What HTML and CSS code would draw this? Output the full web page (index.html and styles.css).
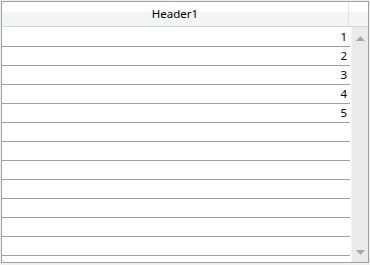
FILE: index.html
```html
<!DOCTYPE html>
<html lang="en">
<head>
    <meta charset="UTF-8">
    <title>Grid</title>
    <link rel="stylesheet" href="styles.css">
</head>
<body>
    <div class="grid">
        <div class="grid-header">
            <div class="col-header">Header1</div>
            <div class="corner"></div>
        </div>
        <div class="grid-body">
            <div class="rows">
                <div class="row">1</div>
                <div class="row">2</div>
                <div class="row">3</div>
                <div class="row">4</div>
                <div class="row">5</div>
                <div class="row"></div>
                <div class="row"></div>
                <div class="row"></div>
                <div class="row"></div>
                <div class="row"></div>
                <div class="row"></div>
                <div class="row"></div>
                <div class="row"></div>
            </div>
            <div class="scrollbar">
                <svg class="arrow" width="9" height="5" viewBox="0 0 9 5"><path d="M4.5 0 L9 5 L0 5 Z" fill="#a7a7a7"/></svg>
                <svg class="arrow" width="9" height="5" viewBox="0 0 9 5"><path d="M0 0 L9 0 L4.5 5 Z" fill="#a7a7a7"/></svg>
            </div>
        </div>
    </div>
</body>
</html>
```

FILE: styles.css
```css
* {
    box-sizing: border-box;
    margin: 0;
    padding: 0;
}

body {
    background-color: #f0f0f0;
    font-family: 'Noto Sans', 'Open Sans', sans-serif;
    font-size: 11.5px;
    color: #000;
}

.grid {
    margin: 1px;
    width: 368px;
    height: 262px;
    border: 1px solid #a0a0a0;
    background-color: #fff;
    display: flex;
    flex-direction: column;
    overflow: hidden;
}

.grid-header {
    display: flex;
    height: 25px;
    flex-shrink: 0;
    border-bottom: 1px solid #d5d5d5;
    background: linear-gradient(#ffffff 0%, #ffffff 40%, #f3f4f6 41%, #f3f4f6 100%);
}

.col-header {
    width: 347px;
    border-right: 1px solid #e1e3e6;
    display: flex;
    align-items: center;
    justify-content: center;
    line-height: 1;
}

.corner {
    flex: 1;
}

.grid-body {
    flex: 1;
    display: flex;
    min-height: 0;
}

.rows {
    width: 348px;
    padding-top: 1px;
    overflow: hidden;
}

.row {
    height: 19px;
    border-bottom: 1px solid #a0a0a0;
    text-align: right;
    padding-right: 3px;
    line-height: 18px;
}

.scrollbar {
    flex: 1;
    margin-left: 1px;
    background-color: #eaeaea;
    border-left: 1px solid #f3f3f3;
    display: flex;
    flex-direction: column;
    justify-content: space-between;
    align-items: center;
    padding: 9px 0 7px 0;
}

.arrow {
    display: block;
}
```
